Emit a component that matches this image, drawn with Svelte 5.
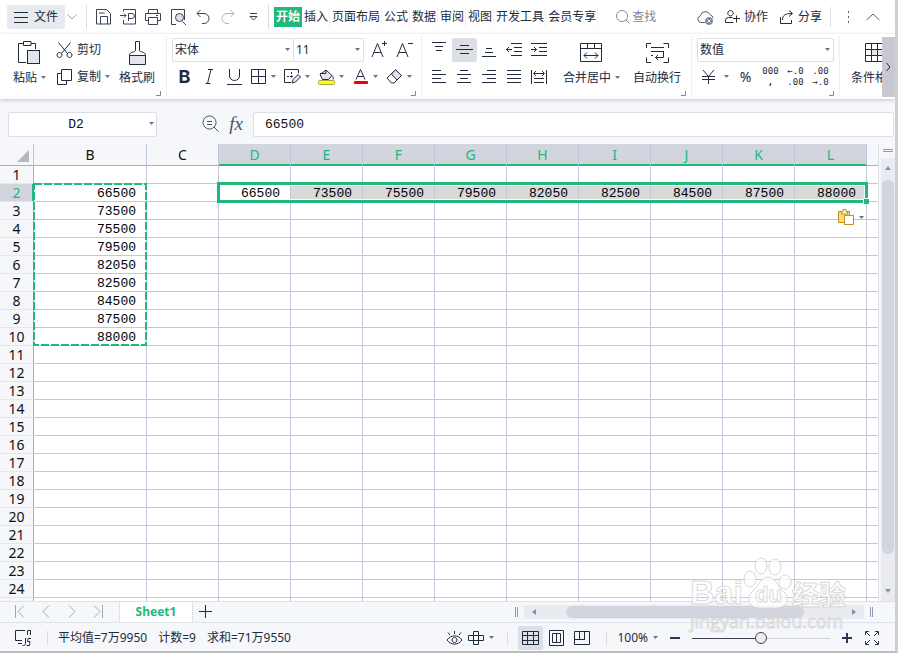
<script lang="ts">
  const values = [66500, 73500, 75500, 79500, 82050, 82500, 84500, 87500, 88000];
  const columns = ['B', 'C', 'D', 'E', 'F', 'G', 'H', 'I', 'J', 'K', 'L'];
  const rows = Array.from({ length: 25 }, (_, i) => i + 1);
  const tabs = ['开始', '插入', '页面布局', '公式', '数据', '审阅', '视图', '开发工具', '会员专享'];

  let activeTab = '开始';
  let zoom = 100;
  let formula = '66500';
  let nameBox = 'D2';

  const quick = [
    { name: 'save', label: '保存' },
    { name: 'export', label: '输出为PDF' },
    { name: 'print', label: '打印' },
    { name: 'preview', label: '打印预览' },
    { name: 'undo', label: '撤销' },
    { name: 'redo', label: '恢复' },
    { name: 'more', label: '更多' },
  ];

  const vertical = [
    { name: 'alignTop', label: '顶端对齐' },
    { name: 'alignMiddle', label: '垂直居中' },
    { name: 'alignBottom', label: '底端对齐' },
    { name: 'outdent', label: '减少缩进量' },
    { name: 'indent', label: '增加缩进量' },
  ];

  const horizontal = [
    { name: 'alignLeft', label: '左对齐' },
    { name: 'alignCenter', label: '水平居中' },
    { name: 'alignRight', label: '右对齐' },
    { name: 'justify', label: '两端对齐' },
    { name: 'distribute', label: '分散对齐' },
  ];

  const icons: Record<string, [number, number, string]> = {
    menu: [15, 12, 'M0 1.500h14M0 6.500h14M0 11.500h14'],
    chevronDown: [11, 6, 'M.5 .5L5 5L9.500 .5'],
    chevronUp: [15, 8, 'M.5 7L7 1L13.500 7'],
    chevronRight: [7, 10, 'M1.500 1L5 5L1.500 9'],
    save: [15, 16, 'M.5 .5h10l4 4v10.500h-14zM4.500 15V7.500h7V15M3 4h5.500'],
    export: [17, 16, 'M3.500 2.500V.5h12v14.500h-12v-4M0 6.500h6M4 4.500l2 2l-2 2M8.500 12V4.500h3.500a2 2 0 0 1 0 5h-3.500'],
    print: [17, 16, 'M3.500 4V.5h9V4M3.500 11.500h-3v-7h15v7h-3M3.500 8.500h9v7h-9zM11 6.500h2'],
    preview: [17, 16, 'M6 15.500H1.500V.5h13V11M12.500 12.500l3.500 3.500'],
    undo: [15, 16, 'M4.500 1L1 4.500L4.500 8M1 4.500h7a5 5 0 0 1 0 10h-2'],
    redo: [15, 16, 'M9.500 1L13 4.500L9.500 8M13 4.500H6a5 5 0 0 0 0 10h2'],
    more: [9, 8, 'M1 .5h7M1 3.500h7L4.500 7z'],
    search: [15, 14, 'M6 .5a5.500 5.500 0 1 0 .01 0M10 10l3.500 3.500'],
    cloud: [17, 14, 'M8 12.500H4a3.400 3.400 0 0 1-.5-6.700a5 5 0 0 1 9.600-1a4 4 0 0 1 3 3.500'],
    people: [15, 14, 'M5.500 .5a2.700 2.700 0 1 0 .01 0M.5 12.500V10a3 3 0 0 1 3-2.500h4M.5 12.500h8M11.500 5.500v7M8 8.500h7'],
    share: [15, 14, 'M1.500 7v6.500h11v-3.500M3.500 10c0-5 3-6.500 9.500-6.500M10 .5l3.500 3L10 6.500'],
    dots: [3, 14, 'M1.500 1v2M1.500 6v2M1.500 11v2'],
    cut: [17, 16, 'M2.500 .5l9 11M14.500 .5l-9 11M3.500 10.500a2.500 2.500 0 1 0 .01 0M13.500 10.500a2.500 2.500 0 1 0 .01 0'],
    copy: [17, 16, 'M5.500 .5h10v11h-10zM5 4.500H1.500v11h9V12'],
    fontUp: [17, 18, 'M1 16L6.500 2.500L12 16M3 11.500h7M13.500 0v5M11 2.500h5'],
    fontDown: [17, 18, 'M1 16L6.500 2.500L12 16M3 11.500h7M12 2.500h5'],
    italic: [9, 16, 'M3 .5h5M.5 14.500h5M6 .5l-3.500 14'],
    underline: [15, 16, 'M2.500 0v7a5 4.500 0 0 0 10 0V0M0 15.500h15'],
    borders: [15, 16, 'M.5 .5h14v14H.5zM7.500 .5v14M.5 7.500h14'],
    alignTop: [15, 18, 'M0 1.500h14M3 5.500h8M4 9.500h6'],
    alignMiddle: [17, 10, 'M4 .5h9M0 4.500h17M4 8.500h9'],
    alignBottom: [15, 14, 'M4 5.500h6M3 9.500h8M0 13.500h14'],
    outdent: [17, 14, 'M0 6.500h6M3 4l-2.500 2.500L3 9M5 .5h11M8 4.500h8M8 8.500h8M5 12.500h11'],
    indent: [17, 14, 'M0 6.500h6M3 4l2.500 2.500L3 9M0 .5h16M8 4.500h8M8 8.500h8M0 12.500h16'],
    alignLeft: [15, 14, 'M0 .5h9M0 4.500h14M0 8.500h9M0 12.500h14'],
    alignCenter: [15, 14, 'M3 .5h8M0 4.500h14M3 8.500h8M0 12.500h14'],
    alignRight: [15, 14, 'M5 .5h9M0 4.500h14M5 8.500h9M0 12.500h14'],
    justify: [15, 14, 'M0 .5h14M0 4.500h14M0 8.500h14M0 12.500h14'],
    distribute: [17, 14, 'M.5 0v14M15.500 0v14M3 3.500h10M5 1L2.500 3.500L5 6M11 1l2.500 2.500L11 6M3 8.500h10M3 12.500h10'],
    merge: [23, 20, 'M.5 .5h21v18H.5zM.5 5.500h21M7.500 .5v5M14.500 .5v5M4 12.500h14M7 9.500l-3 3l3 3M15 9.500l3 3l-3 3'],
    wrap: [23, 20, 'M5 .5H.5V5M17.500 .5H22.500V5M.5 14.500V19.500H5M22.500 14.500V19.500h-5M5 4.500h13M5 8.500h13M5 12.500h2M17.500 8.500v6h-8M12 12l-2.500 2.500L12 17'],
    yen: [15, 16, 'M2 1l5.500 6.500L13 1M7.500 7.500V15M1 7.500h13M1 10.500h13'],
    zoomOut: [17, 18, 'M7.500 1a6.500 6.500 0 1 0 .01 0M12 12l4.500 4.500M5 6.500h5M5 9.500h5'],
    first: [10, 14, 'M.5 0v13M9 .5L3 6.500L9 12.500'],
    prev: [8, 14, 'M7 .5L1 6.500L7 12.500'],
    next: [8, 14, 'M1 .5L7 6.500L1 12.500'],
    last: [10, 14, 'M9.500 0v13M1 .5L7 6.500L1 12.500'],
    add: [13, 14, 'M6.500 0v13M0 6.500h13'],
    eye: [17, 16, 'M1 10c4-5.500 11-5.500 15 0c-4 5.500-11 5.500-15 0M8.500 7.500a2.500 2.500 0 1 0 .01 0M8.500 1v3M2 2.500l2 2.500M15 2.500l-2 2.500'],
    cross: [17, 14, 'M5.500 .5h5v13h-5zM.5 4.500h15v5H.5z'],
    normalView: [17, 14, 'M.5 .5h16v13H.5zM.5 4.500h16M.5 9.500h16M5.500 .5v13M11.500 .5v13'],
    pageView: [15, 16, 'M.5 .5h14v15H.5zM3.500 3.500h8v9h-8zM7.500 3.500v9'],
    breakView: [17, 14, 'M.5 .5h15v13H.5zM5.500 .5v8M10.500 .5v8M.5 8.500h10v-8'],
    launcher: [5, 5, 'M4.500 0v4.500H0'],
  };
</script>

{#snippet icon(name: string)}
  <svg class="icon" width={icons[name][0]} height={icons[name][1]} viewBox="0 0 {icons[name][0]} {icons[name][1]}" aria-hidden="true">
    <path d={icons[name][2]} />
  </svg>
{/snippet}

{#snippet caret()}
  <svg class="caret" width="5" height="4" viewBox="0 0 5 4" aria-hidden="true"><path d="M0 0h5L2.500 3z" /></svg>
{/snippet}

{#snippet launcher()}
  <button class="launcher" aria-label="更多设置">{@render icon('launcher')}</button>
{/snippet}

<div class="window">
  <header class="topbar">
    <button class="file">{@render icon('menu')}文件</button>
    <button class="file-more" aria-label="文件菜单">{@render icon('chevronDown')}</button>
    <div class="quick">
      {#each quick as item}
        <button class="tool {item.name}" aria-label={item.label}>
          {@render icon(item.name)}
          {#if item.name === 'preview'}
            <svg class="lens" width="9" height="9" viewBox="0 0 9 9"><circle cx="4.500" cy="4.500" r="4" /></svg>
          {/if}
        </button>
      {/each}
    </div>
    <nav class="tabs">
      {#each tabs as tab}
        <button class:active={tab === activeTab} on:click={() => (activeTab = tab)}>{tab}</button>
      {/each}
    </nav>
    <button class="search">{@render icon('search')}查找</button>
    <div class="account">
      <button class="cloud" aria-label="云同步">
        {@render icon('cloud')}
        <svg class="cloud-badge" width="8" height="8" viewBox="0 0 8 8">
          <circle cx="4" cy="4" r="3.500" />
          <path d="M2.500 2.500l3 3M5.500 2.500l-3 3" />
        </svg>
      </button>
      <button>{@render icon('people')}协作</button>
      <button>{@render icon('share')}分享</button>
      <span class="rule"></span>
      <button class="dots" aria-label="更多">{@render icon('dots')}</button>
      <button class="collapse" aria-label="收起功能区">{@render icon('chevronUp')}</button>
    </div>
  </header>

  <section class="ribbon">
    <div class="group clipboard">
      <button class="big">
        <svg width="23" height="24" viewBox="0 0 23 24" aria-hidden="true">
          <path class="line" d="M5 2.500H.5v19H8M13 2.500h4.500V8M5.500 .5h7.500v4H5.500z" />
          <rect class="soft" x="9.500" y="9.500" width="12" height="13" />
        </svg>
        <span>粘贴{@render caret()}</span>
      </button>
      <div class="stack">
        <button class="labelled">{@render icon('cut')}剪切</button>
        <button class="labelled">{@render icon('copy')}复制{@render caret()}</button>
      </div>
      <button class="big plain">
        <svg width="19" height="24" viewBox="0 0 19 24" aria-hidden="true">
          <path class="line" d="M7.500 9V.5h4V9c0 3 6 1 6 5.500H1.500C1.500 10 7.500 12 7.500 9z" />
          <path class="soft" d="M1.500 14.500h16v9h-16z" />
        </svg>
        <span>格式刷</span>
      </button>
      {@render launcher()}
    </div>

    <div class="group font">
      <div class="line-row">
        <label class="combo family">
          <select aria-label="字体"><option>宋体</option></select>
          {@render caret()}
        </label>
        <label class="combo size">
          <select aria-label="字号"><option>11</option></select>
          {@render caret()}
        </label>
        <button class="tool" aria-label="增大字号">{@render icon('fontUp')}</button>
        <button class="tool" aria-label="减小字号">{@render icon('fontDown')}</button>
      </div>
      <div class="line-row">
        <button class="tool bold">B</button>
        <button class="tool" aria-label="倾斜">{@render icon('italic')}</button>
        <button class="tool" aria-label="下划线">{@render icon('underline')}</button>
        <button class="split" aria-label="边框"><i>{@render icon('borders')}</i>{@render caret()}</button>
        <button class="split" aria-label="绘制边框">
          <i>
            <svg width="17" height="16" viewBox="0 0 17 16">
              <path class="line" d="M14.500 4V.5H.5v13H7M7.500 3v2M7.500 6.500v2M3 7.500h2M6 7.500h3" />
              <path class="soft" d="M8 14l1-3.500l5-5l2.500 2.500l-5 5z" />
            </svg>
          </i>
          {@render caret()}
        </button>
        <button class="split" aria-label="填充颜色">
          <i>
            <svg width="17" height="16" viewBox="0 0 17 16">
              <path class="soft" d="M2 5.500L8 1l6 5.500l-3.500 4H4.500z" />
              <path class="line" d="M2 4.500h6M8 1v3M14 6.500c1.500 1.500 1.500 2.500 1 4" />
              <rect x=".5" y="11.500" width="16" height="4" rx="1" fill="#ffff00" stroke="#a9a64a" />
            </svg>
          </i>
          {@render caret()}
        </button>
        <button class="split" aria-label="字体颜色">
          <i>
            <svg width="15" height="16" viewBox="0 0 15 16">
              <path class="line" d="M3 10.500L7.500 .5L12 10.500M4.500 7.500h6" />
              <rect x="1" y="12" width="14" height="3" rx="1" fill="#f40000" />
            </svg>
          </i>
          {@render caret()}
        </button>
        <button class="split" aria-label="清除">
          <i>
            <svg width="17" height="16" viewBox="0 0 17 16">
              <path class="line" d="M1 9L9.500 .8L15.500 6.500L8 14H5.500z" />
              <path class="soft" d="M5.500 5L9.500 .8L15.500 6.500L11 11z" />
            </svg>
          </i>
          {@render caret()}
        </button>
      </div>
      {@render launcher()}
    </div>

    <div class="group align">
      <div class="stack">
        <div class="line-row">
          {#each vertical as item}
            <button class="tool" class:pressed={item.name === 'alignMiddle'} aria-label={item.label}>{@render icon(item.name)}</button>
          {/each}
        </div>
        <div class="line-row">
          {#each horizontal as item}
            <button class="tool" aria-label={item.label}>{@render icon(item.name)}</button>
          {/each}
        </div>
      </div>
      <button class="big">{@render icon('merge')}<span>合并居中{@render caret()}</span></button>
      <button class="big plain">{@render icon('wrap')}<span>自动换行</span></button>
      {@render launcher()}
    </div>

    <div class="group number">
      <div class="line-row">
        <label class="combo format">
          <select aria-label="数字格式"><option>数值</option></select>
          {@render caret()}
        </label>
      </div>
      <div class="line-row">
        <button class="split" aria-label="货币"><i>{@render icon('yen')}</i>{@render caret()}</button>
        <button class="tool percent">%</button>
        <button class="tool digits"><span>000</span><span class="comma">,</span></button>
        <button class="tool digits"><span>←.0</span><span>.00</span></button>
        <button class="tool digits"><span>.00</span><span>→.0</span></button>
      </div>
      {@render launcher()}
    </div>

    <div class="group styles">
      <button class="big plain">
        <svg width="21" height="20" viewBox="0 0 21 20" aria-hidden="true">
          <path class="soft" d="M6.500 6.500h13v6h-13z" />
          <path class="line" d="M.5 .5h19v18H.5zM.5 6.500h19M.5 12.500h19M6.500 .5v18M12.500 .5v18" />
        </svg>
        <span>条件格式</span>
      </button>
    </div>
    <button class="ribbon-next" aria-label="向右滚动">{@render icon('chevronRight')}</button>
  </section>

  <section class="formula">
    <label class="name-box">
      <input aria-label="名称框" bind:value={nameBox} />
      {@render caret()}
    </label>
    <button class="tool" aria-label="缩小">{@render icon('zoomOut')}</button>
    <button class="fx">fx</button>
    <input class="formula-input" aria-label="编辑栏" bind:value={formula} />
  </section>

  <main class="sheet">
    <div class="cells">
      <table>
        <colgroup>
          <col class="c-head" />
          <col class="c-wide" />
          {#each columns.slice(1) as _}<col class="c-cell" />{/each}
          <col />
        </colgroup>
        <thead>
          <tr>
            <th class="corner" aria-label="全选"><svg width="12" height="12" viewBox="0 0 12 12"><path d="M12 0v12H0z" /></svg></th>
            {#each columns as column, c}
              <th class:selected={c > 1}>{column}</th>
            {/each}
            <th class="rest"></th>
          </tr>
        </thead>
        <tbody>
          {#each rows as row}
            <tr>
              <th class:selected={row === 2}>{row < 25 ? row : ''}</th>
              {#each columns as _, c}
                {#if c === 0}
                  <td>{values[row - 2] ?? ''}</td>
                {:else if c > 1 && row === 2}
                  <td class:picked={c > 2}>{values[c - 2]}</td>
                {:else}
                  <td></td>
                {/if}
              {/each}
              <td class="rest"></td>
            </tr>
          {/each}
        </tbody>
      </table>
      <svg class="ants" aria-hidden="true"><rect x="1" y="1" width="112" height="161" /></svg>
      <div class="selection"><span class="handle"></span></div>
      <button class="paste-options" aria-label="粘贴选项">
        <svg width="17" height="17" viewBox="0 0 17 17">
          <path d="M.5 2.500h11v11H.5z" fill="#ffdc6b" stroke="#b8912c" />
          <path d="M3.500 2.500h1.500v-2h3v2h1.500v2.500h-6z" fill="#fff3c4" stroke="#b8912c" />
          <path d="M6.500 6.500h9v9h-9z" fill="#fff" stroke="#b8912c" />
        </svg>
        {@render caret()}
      </button>
    </div>
    <div class="vscroll">
      <span class="grip"></span>
      <div class="track">
        <svg width="6" height="4" viewBox="0 0 6 4"><path d="M0 4h6L3 0z" /></svg>
        <span class="thumb"></span>
        <svg width="6" height="4" viewBox="0 0 6 4"><path d="M0 0h6L3 4z" /></svg>
      </div>
    </div>
  </main>

  <section class="sheets">
    <div class="pager">
      <button aria-label="第一个">{@render icon('first')}</button>
      <button aria-label="上一个">{@render icon('prev')}</button>
      <button aria-label="下一个">{@render icon('next')}</button>
      <button aria-label="最后一个">{@render icon('last')}</button>
    </div>
    <button class="sheet-tab">Sheet1</button>
    <button class="tool add" aria-label="新建工作表">{@render icon('add')}</button>
    <div class="hscroll">
      <span class="grip"></span>
      <div class="track">
        <svg width="4" height="6" viewBox="0 0 4 6"><path d="M4 0v6L0 3z" /></svg>
        <span class="thumb"></span>
        <svg width="4" height="6" viewBox="0 0 4 6"><path d="M0 0v6L4 3z" /></svg>
      </div>
      <span class="grip"></span>
    </div>
  </section>

  <footer class="status">
    <button class="macro" aria-label="宏">
      <svg width="17" height="16" viewBox="0 0 17 16">
        <path class="line" d="M10 .5H.5v10H7M3 13.500h4M12.500 5V.5h3V5M10.500 8v5.500c0 2-2 2-3 2M16 8.500h-3l-.5 3H15l-.5 4h-3" />
      </svg>
    </button>
    <span class="rule"></span>
    <div class="summary"><span>平均值=7万9950</span><span>计数=9</span><span>求和=71万9550</span></div>
    <div class="views">
      <button class="tool" aria-label="护眼模式">{@render icon('eye')}</button>
      <button class="split" aria-label="阅读模式">{@render icon('cross')}{@render caret()}</button>
      <span class="rule"></span>
      <button class="tool pressed" aria-label="普通视图">{@render icon('normalView')}</button>
      <button class="tool" aria-label="页面布局">{@render icon('pageView')}</button>
      <button class="tool" aria-label="分页预览">{@render icon('breakView')}</button>
      <span class="rule"></span>
      <button class="percent-box">{zoom}%{@render caret()}</button>
      <button class="step" aria-label="缩小" on:click={() => (zoom -= 10)}>
        <svg width="10" height="10" viewBox="0 0 10 10"><path d="M0 5h10" /></svg>
      </button>
      <input type="range" min="10" max="190" bind:value={zoom} aria-label="缩放比例" />
      <button class="step" aria-label="放大" on:click={() => (zoom += 10)}>
        <svg width="10" height="10" viewBox="0 0 10 10"><path d="M0 5h10M5 0v10" /></svg>
      </button>
      <button class="full" aria-label="全屏">
        <svg width="14" height="14" viewBox="0 0 14 14">
          <path d="M.5 4V.5H4M1 1l4 4M10 .5h3.500V4M13 1L9 5M.5 10v3.500H4M1 13l4-4M10 13.500h3.500V10M13 13L9 9" />
        </svg>
      </button>
    </div>
  </footer>

  <div class="watermark">
    <div class="brand">
      <span class="bai">Bai</span>
      <span class="paw">
        <svg width="50" height="52" viewBox="0 0 50 52" aria-hidden="true">
          <ellipse cx="8" cy="22" rx="6" ry="8" />
          <ellipse cx="19" cy="9" rx="6" ry="8" />
          <ellipse cx="33" cy="10" rx="6" ry="8" />
          <ellipse cx="43" cy="25" rx="6" ry="7" />
          <path d="M26 20c7 0 9 8 14 13c6 5 7 11 3 15c-4 4-10 3-17 3s-13 1-17-3c-4-4-3-10 3-15c5-5 7-13 14-13z" />
        </svg>
        <span class="du">du</span>
      </span>
      <span class="jing">经验</span>
    </div>
    <div class="site">jingyan.baidu.com</div>
  </div>
</div>

<style>
  :global(body) {
    margin: 0;
    background: #c4c4c4;
  }

  .window {
    --green: #21b87c;
    --ink: #222b3c;
    --bar: #f5f7fa;
    --grid: #c0c8da;
    --soft: #d2d5dd;
    position: relative;
    display: flex;
    flex-direction: column;
    box-sizing: border-box;
    height: 100vh;
    border-right: 3px solid #cfcfcf;
    border-bottom: 2px solid #bdbdbd;
    background: #fff;
    color: var(--ink);
    font: 12px/18px "Noto Sans", "Noto Sans CJK SC", sans-serif;
    overflow: hidden;
  }

  button,
  input,
  select {
    margin: 0;
    padding: 0;
    border: 0;
    background: none;
    color: inherit;
    font: inherit;
    outline: none;
  }
  button {
    display: flex;
    align-items: center;
    justify-content: center;
    flex: none;
    white-space: nowrap;
    cursor: pointer;
  }
  svg {
    display: block;
    flex: none;
  }
  .icon,
  .line {
    fill: none;
    stroke: currentColor;
  }
  .soft {
    fill: #e3e5ec;
    stroke: currentColor;
  }
  .caret {
    fill: #6b7489;
  }
  .rule {
    width: 1px;
    height: 14px;
    background: #d9dce2;
  }

  /* title row */
  .topbar {
    display: flex;
    align-items: center;
    height: 34px;
    flex: none;
  }
  .file {
    width: 58px;
    height: 24px;
    margin-left: 7px;
    gap: 5px;
    border-radius: 2px;
    background: #e7eaef;
  }
  .file-more {
    width: 21px;
    height: 24px;
    padding-right: 6px;
    color: #9a9fa9;
    box-sizing: border-box;
  }
  .quick {
    display: flex;
    padding: 0 2px 0 4px;
    border: solid #d9dce2;
    border-width: 0 1px;
    color: #3a4254;
  }
  .tool {
    position: relative;
    width: 25px;
    height: 24px;
  }
  .redo {
    color: #b0b4bb;
  }
  .lens {
    position: absolute;
    left: 9px;
    top: 8px;
    fill: #dcdfe5;
    stroke: currentColor;
  }
  .tabs {
    display: flex;
    margin-left: 5px;
  }
  .tabs button {
    height: 20px;
    padding: 0 2px;
    box-shadow: inset -1px 0 #f0f1f3;
  }
  .tabs .active {
    background: var(--green);
    color: #fff;
    font-weight: bold;
    box-shadow: none;
  }
  .search {
    margin-left: 18px;
    gap: 1px;
    color: #7d879b;
  }
  .account {
    display: flex;
    align-items: center;
    margin-left: auto;
    gap: 11px;
    padding-right: 14px;
  }
  .account button {
    gap: 4px;
    height: 24px;
  }
  .account .rule {
    height: 20px;
    margin-left: -3px;
  }
  .account .dots,
  .account .collapse,
  .account .cloud {
    color: #565d6c;
  }
  .cloud {
    position: relative;
  }
  .cloud-badge {
    position: absolute;
    right: 1px;
    top: 12px;
    fill: #7c869c;
    stroke: #7c869c;
  }
  .cloud-badge path {
    stroke: #fff;
  }
  .dots {
    width: 13px;
  }

  /* ribbon */
  .ribbon {
    position: relative;
    z-index: 1;
    display: flex;
    height: 65px;
    flex: none;
    box-shadow: 0 1px 4px rgba(0, 0, 0, 0.22);
    background: #fff;
  }
  .group {
    position: relative;
    display: flex;
    box-sizing: border-box;
    flex: none;
    padding-top: 4px;
  }
  .group:not(.styles)::after {
    content: '';
    position: absolute;
    right: 0;
    top: 2px;
    bottom: 2px;
    width: 1px;
    background: #eceef1;
  }
  .clipboard {
    width: 167px;
    padding-left: 11px;
    gap: 7px;
  }
  .font {
    width: 255px;
    padding-left: 5px;
  }
  .align {
    width: 270px;
    padding-left: 5px;
    gap: 9px;
  }
  .number {
    width: 148px;
    padding-left: 5px;
  }
  .font,
  .number,
  .stack {
    flex-direction: column;
    gap: 3px;
  }
  .stack {
    display: flex;
  }
  .styles {
    flex: 1;
    min-width: 0;
    padding-left: 9px;
    overflow: hidden;
  }
  .launcher {
    position: absolute;
    right: 6px;
    bottom: 3px;
    color: #7d879b;
  }
  .line-row {
    display: flex;
    height: 24px;
  }
  .big {
    flex-direction: column;
    justify-content: flex-start;
    align-self: flex-start;
    height: 49px;
    padding: 0 2px;
  }
  .plain {
    padding-right: 3px;
  }
  .big > :global(svg) {
    margin: auto;
  }
  .big span {
    display: flex;
    align-items: center;
    gap: 4px;
    margin-top: 1px;
  }
  .labelled {
    gap: 4px;
    height: 24px;
    padding-left: 1px;
    justify-content: flex-start;
  }
  .combo {
    position: relative;
    display: flex;
    align-items: center;
    box-sizing: border-box;
    height: 24px;
    padding-right: 3px;
    border: 1px solid #dcdfe5;
    border-radius: 2px;
  }
  .combo select {
    flex: 1;
    min-width: 0;
    padding-left: 2px;
    appearance: none;
  }
  .family {
    width: 122px;
  }
  .size {
    width: 71px;
    margin-left: -1px;
    margin-right: 3px;
  }
  .format {
    width: 137px;
  }
  .bold {
    font: bold 18px/24px Inter, sans-serif;
  }
  .split {
    display: flex;
    width: 34px;
    height: 24px;
    justify-content: flex-start;
  }
  .split i {
    display: flex;
    width: 23px;
    margin-right: 1px;
    justify-content: center;
  }
  .number .split {
    width: 36px;
  }
  .number .split i {
    margin-right: 4px;
  }
  .percent {
    font-size: 14px;
  }
  .digits {
    flex-direction: column;
    font: 9px/11px "DejaVu Sans Mono", monospace;
  }
  .comma {
    font-weight: bold;
  }
  .pressed {
    border-radius: 2px;
    background: #dce0e6;
  }
  .ribbon-next {
    width: 13px;
    margin: 3px 0 2px;
    background: #c8c9d0;
  }

  /* formula bar */
  .formula {
    display: flex;
    align-items: center;
    height: 45px;
    flex: none;
    box-sizing: border-box;
    padding: 5px 1px 0 8px;
    background: var(--bar);
    color: #4a5266;
  }
  .name-box,
  .formula-input {
    box-sizing: border-box;
    height: 25px;
    border: 1px solid #dcdfe5;
    border-radius: 2px;
    background: #fff;
    color: #111;
    font: 13px/23px "Liberation Mono", monospace;
  }
  .name-box {
    display: flex;
    align-items: center;
    width: 149px;
    margin-right: 41px;
    padding-right: 2px;
  }
  .name-box input {
    flex: 1;
    min-width: 0;
    padding-right: 6px;
    text-align: center;
  }
  .fx {
    width: 26px;
    margin-right: 4px;
    font: italic 19px/24px "Liberation Serif", serif;
  }
  .formula-input {
    flex: 1;
    min-width: 0;
    padding-left: 11px;
  }

  /* sheet */
  .sheet {
    display: flex;
    flex: 1;
    min-height: 0;
    background: var(--bar);
  }
  .cells {
    position: relative;
    flex: 1;
    min-width: 0;
    overflow: hidden;
    background: #fff;
  }
  table {
    width: 100%;
    table-layout: fixed;
    border-spacing: 0;
  }
  .c-head {
    width: 34px;
  }
  .c-wide {
    width: 113px;
  }
  .c-cell {
    width: 72px;
  }
  th,
  td {
    box-sizing: border-box;
    height: 18px;
    padding: 0;
    border: solid var(--grid);
    border-width: 0 1px 1px 0;
    line-height: 17px;
  }
  th {
    background: var(--bar);
    color: #111;
    font-size: 14px;
    font-weight: normal;
  }
  td {
    padding: 3px 10px 0 0;
    color: #000;
    font: 13px/14px "Liberation Mono", monospace;
    text-align: right;
  }
  thead th {
    height: 22px;
    border-bottom-color: #a4aec6;
  }
  tbody th {
    border-right-color: #a4aec6;
    border-bottom-color: #e3e6ed;
  }
  .selected {
    background: var(--soft);
    color: var(--green);
  }
  thead .selected {
    border-bottom-color: var(--green);
    box-shadow: inset 0 -1px var(--green);
  }
  tbody .selected {
    border-right-color: var(--green);
    box-shadow: inset -1px 0 var(--green);
  }
  .corner svg {
    margin: 3px 4px 0 auto;
    fill: #b5b7bc;
  }
  .rest {
    padding: 0;
    border-right: 0;
  }
  .picked {
    background: #d9d9d9;
  }
  .ants {
    position: absolute;
    left: 33px;
    top: 39px;
    width: 114px;
    height: 163px;
    fill: none;
    stroke: var(--green);
    stroke-width: 2;
    stroke-dasharray: 8 2;
  }
  .selection {
    position: absolute;
    left: 217px;
    top: 38px;
    box-sizing: border-box;
    width: 651px;
    height: 21px;
    border: 3px solid var(--green);
    box-shadow: inset 0 0 0 1px #fff;
  }
  .handle {
    position: absolute;
    right: -4px;
    bottom: -4px;
    width: 5px;
    height: 5px;
    border: solid #fff;
    border-width: 1px 0 0 1px;
    background: var(--green);
  }
  .paste-options {
    position: absolute;
    left: 838px;
    top: 65px;
    gap: 4px;
  }
  .vscroll {
    display: flex;
    flex-direction: column;
    width: 14px;
    padding-left: 2px;
    border-left: 1px solid #dfe1e7;
  }
  .grip {
    flex: none;
    border: solid #8f9bb3;
  }
  .vscroll .grip {
    height: 1px;
    margin: 5px 2px 6px;
    border-width: 1px 0;
  }
  .track {
    display: flex;
    flex: 1;
    align-items: center;
    background: #e9ebf1;
    fill: #8090b0;
  }
  .vscroll .track {
    flex-direction: column;
    padding: 8px 0;
  }
  .thumb {
    border-radius: 6px;
    background: #d2d5de;
  }
  .vscroll .thumb {
    width: 12px;
    flex: 1;
    margin: 10px 0 35px;
  }

  /* sheet tabs */
  .sheets {
    display: flex;
    height: 20px;
    flex: none;
    border: solid #dfe2e8;
    border-width: 1px 0;
    background: var(--bar);
  }
  .pager {
    display: flex;
    width: 119px;
    padding-left: 7px;
    box-sizing: border-box;
    color: #a3a7ae;
  }
  .pager button {
    width: 26px;
  }
  .sheet-tab {
    width: 74px;
    box-sizing: border-box;
    border: solid #dfe2e8;
    border-width: 0 1px;
    background: #fff;
    color: var(--green);
    font-weight: bold;
  }
  .add {
    height: 20px;
  }
  .hscroll {
    display: flex;
    align-items: center;
    width: 40%;
    margin-left: auto;
    padding-right: 22px;
    gap: 6px;
  }
  .hscroll .grip {
    width: 1px;
    height: 10px;
    border-width: 0 1px;
  }
  .hscroll .track {
    height: 14px;
    padding: 0 8px;
  }
  .hscroll .thumb {
    height: 12px;
    flex: 1;
    margin: 0 48px 0 30px;
  }

  /* status bar */
  .status {
    display: flex;
    align-items: center;
    box-sizing: border-box;
    height: 28px;
    padding-top: 2px;
    flex: none;
    background: var(--bar);
  }
  .macro {
    width: 47px;
  }
  .summary {
    display: flex;
    gap: 11px;
    padding-left: 10px;
    white-space: nowrap;
  }
  .views {
    display: flex;
    align-items: center;
    margin-left: auto;
    padding-right: 16px;
  }
  .views .rule {
    margin: 0 10px;
  }
  .views .tool {
    margin-right: 1px;
  }
  .views .split {
    gap: 4px;
    width: 29px;
  }
  .percent-box {
    gap: 5px;
    margin-right: 12px;
  }
  .step svg,
  .full svg {
    fill: none;
    stroke: #2b3854;
    stroke-width: 2;
  }
  .full {
    margin-left: 13px;
  }
  .full svg {
    stroke-width: 1;
  }
  input[type='range'] {
    width: 138px;
    height: 14px;
    margin: 0 12px;
    appearance: none;
    background: linear-gradient(to right, #3a4254 50%, #cfd2d8 50%) center / 100% 1px no-repeat;
  }
  input[type='range']::-webkit-slider-thumb {
    width: 12px;
    height: 12px;
    box-sizing: border-box;
    appearance: none;
    border: 1px solid #444;
    border-radius: 50%;
    background: #eee;
  }

  /* translucent mark over the lower right corner */
  .watermark {
    position: absolute;
    right: 48px;
    bottom: 18px;
    z-index: 2;
    width: 157px;
    color: rgba(255, 255, 255, 0.8);
    -webkit-text-stroke: 1px rgba(205, 205, 208, 0.75);
    pointer-events: none;
  }
  .brand {
    display: flex;
    align-items: flex-end;
    height: 52px;
  }
  .bai {
    width: 52px;
    font: bold 34px/34px "Liberation Sans", sans-serif;
  }
  .paw {
    position: relative;
    width: 50px;
  }
  .paw svg {
    fill: rgba(255, 255, 255, 0.75);
    stroke: rgba(205, 205, 208, 0.8);
  }
  .du {
    position: absolute;
    left: 13px;
    bottom: 3px;
    font: bold 22px/22px "Liberation Sans", sans-serif;
  }
  .jing {
    font: bold 27px/30px "Noto Sans CJK SC", sans-serif;
  }
  .site {
    font: 18px/24px "Open Sans", sans-serif;
  }
</style>
